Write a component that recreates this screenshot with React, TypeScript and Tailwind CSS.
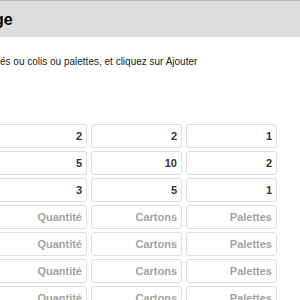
const rows: [string, string, string][] = [
  ["2", "2", "1"],
  ["5", "10", "2"],
  ["3", "5", "1"],
  ["", "", ""],
  ["", "", ""],
  ["", "", ""],
  ["", "", ""],
];

const placeholders = ["Quantité", "Cartons", "Palettes"];

function Cell({ value, placeholder }: { value: string; placeholder: string }) {
  return (
    <div className="h-[24px] rounded-[3px] border border-[#dedede] bg-white flex items-center justify-end px-[4px]">
      {value ? (
        <span className="font-bold text-[11px] text-[#333]">{value}</span>
      ) : (
        <span className="font-bold text-[11px] text-[#a3a3a3]">{placeholder}</span>
      )}
    </div>
  );
}

export default function App() {
  return (
    <div className="w-[300px] h-[300px] overflow-hidden bg-white font-['Liberation_Sans',Arial,sans-serif]">
      {/* Header */}
      <div className="h-[37px] bg-[#dcdcdc] border-t border-[#b8b8b8] flex items-center">
        <h1 className="-ml-[6px] text-[16px] font-bold text-black leading-none pt-[1px]">ge</h1>
      </div>

      {/* Hint */}
      <p className="mt-[18px] text-[10px] leading-[14px] text-[#222]">
        és ou colis ou palettes, et cliquez sur Ajouter
      </p>

      {/* Inputs */}
      <div className="mt-[55px] -ml-[4px] grid grid-cols-[91px_91px_91px] gap-x-[4px] gap-y-[3px]">
        {rows.map((r, i) =>
          r.map((v, j) => <Cell key={`${i}-${j}`} value={v} placeholder={placeholders[j]} />)
        )}
      </div>
    </div>
  );
}
